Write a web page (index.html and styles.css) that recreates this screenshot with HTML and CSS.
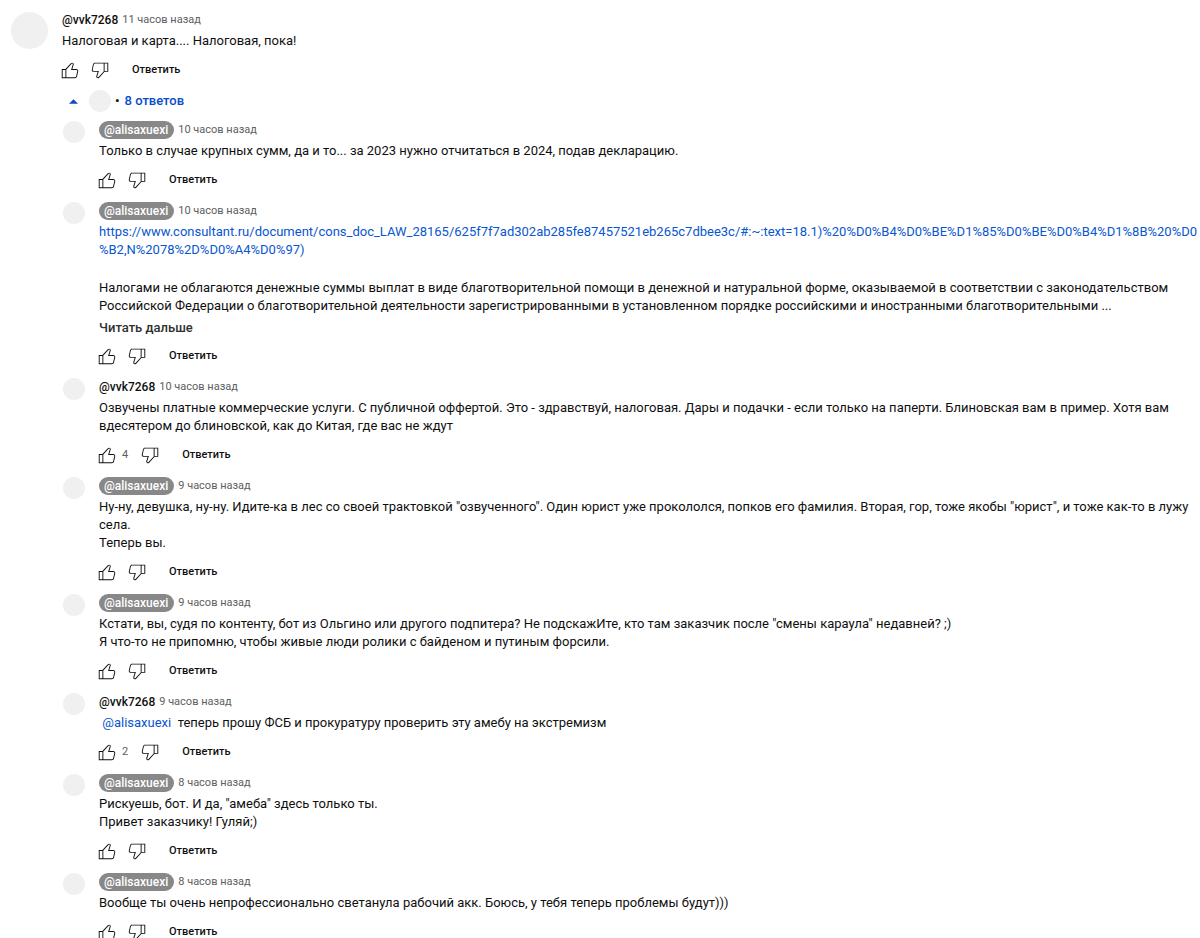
FILE: index.html
```html
<!DOCTYPE html>
<html lang="ru">
<head>
<meta charset="utf-8">
<title>Комментарии</title>
<link rel="stylesheet" href="styles.css">
</head>
<body>
<svg class="sprite" aria-hidden="true">
  <symbol id="like" viewBox="0 0 24 24"><path d="M18.77,11h-4.23l1.52-4.94C16.38,5.03,15.54,4,14.38,4c-0.58,0-1.14,0.24-1.52,0.65L7,11H3v10h4h1h9.43c1.06,0,1.98-0.67,2.19-1.61l1.34-6C21.23,12.15,20.18,11,18.77,11z M7,20H4v-8h3V20z M19.98,13.17l-1.34,6C18.54,19.65,18.03,20,17.43,20H8v-8.61l5.6-6.06C13.79,5.12,14.08,5,14.38,5c0.26,0,0.5,0.11,0.63,0.3c0.07,0.1,0.15,0.26,0.09,0.47l-1.52,4.94L13.18,12h1.35h4.23c0.41,0,0.8,0.17,1.03,0.46C19.92,12.61,20.05,12.86,19.98,13.17z"/></symbol>
  <symbol id="dislike" viewBox="0 0 24 24"><path d="M17,4h-1H6.57C5.5,4,4.59,4.67,4.38,5.61l-1.34,6C2.77,12.85,3.82,14,5.23,14h4.23l-1.52,4.94C7.62,19.97,8.46,21,9.62,21c0.58,0,1.14-0.24,1.52-0.65L17,14h4V4H17z M10.4,19.67C10.21,19.88,9.92,20,9.62,20c-0.26,0-0.5-0.11-0.63-0.3c-0.07-0.1-0.15-0.26-0.09-0.47l1.52-4.94l0.4-1.29H9.46H5.23c-0.41,0-0.8-0.17-1.03-0.46c-0.12-0.15-0.25-0.4-0.18-0.72l1.34-6C5.46,5.35,5.97,5,6.57,5H16v8.61L10.4,19.67z M20,13h-3V5h3V13z"/></symbol>
</svg>
<main class="thread">
  <article class="comment">
    <div class="avatar avatar-large"></div>
    <div class="content">
      <header class="meta"><a class="name" href="#">@vvk7268</a><a class="time" href="#">11 часов назад</a></header>
      <div class="text"><p>Налоговая и карта.... Налоговая, пока!</p></div>
      <div class="actions">
        <button class="icon-button" aria-label="Нравится"><svg class="icon"><use href="#like"/></svg></button>
        <button class="icon-button" aria-label="Не нравится"><svg class="icon"><use href="#dislike"/></svg></button>
        <button class="reply-button">Ответить</button>
      </div>
      <button class="toggle">
        <svg class="caret" viewBox="0 0 10 5" aria-hidden="true"><path d="M0 5L5 0L10 5Z"/></svg>
        <span class="avatar"></span>
        <span class="dot">•</span>
        <span>8 ответов</span>
      </button>
      <section class="replies">
        <article class="comment reply">
          <div class="avatar"></div>
          <div class="content">
            <header class="meta"><a class="name author" href="#">@alisaxuexi</a><a class="time" href="#">10 часов назад</a></header>
            <div class="text"><p>Только в случае крупных сумм, да и то... за 2023 нужно отчитаться в 2024, подав декларацию.</p></div>
            <div class="actions">
              <button class="icon-button" aria-label="Нравится"><svg class="icon"><use href="#like"/></svg></button>
              <button class="icon-button" aria-label="Не нравится"><svg class="icon"><use href="#dislike"/></svg></button>
              <button class="reply-button">Ответить</button>
            </div>
          </div>
        </article>
        <article class="comment reply">
          <div class="avatar"></div>
          <div class="content">
            <header class="meta"><a class="name author" href="#">@alisaxuexi</a><a class="time" href="#">10 часов назад</a></header>
            <div class="text">
              <p><a class="link long-link" href="#">https://www.consultant.ru/document/cons_doc_LAW_28165/625f7f7ad302ab285fe87457521eb265c7dbee3c/#:~:text=18.1)%20%D0%B4%D0%BE%D1%85%D0%BE%D0%B4%D1%8B%20%D0%B2,N%2078%2D%D0%A4%D0%97)</a></p>
              <p>Налогами не облагаются денежные суммы выплат в виде благотворительной помощи в денежной и натуральной форме, оказываемой в соответствии с законодательством Российской Федерации о благотворительной деятельности зарегистрированными в установленном порядке российскими и иностранными благотворительными ...</p>
            </div>
            <button class="more">Читать дальше</button>
            <div class="actions">
              <button class="icon-button" aria-label="Нравится"><svg class="icon"><use href="#like"/></svg></button>
              <button class="icon-button" aria-label="Не нравится"><svg class="icon"><use href="#dislike"/></svg></button>
              <button class="reply-button">Ответить</button>
            </div>
          </div>
        </article>
        <article class="comment reply">
          <div class="avatar"></div>
          <div class="content">
            <header class="meta"><a class="name" href="#">@vvk7268</a><a class="time" href="#">10 часов назад</a></header>
            <div class="text"><p>Озвучены платные коммерческие услуги. С публичной оффертой. Это - здравствуй, налоговая. Дары и подачки - если только на паперти. Блиновская вам в пример. Хотя вам вдесятером до блиновской, как до Китая, где вас не ждут</p></div>
            <div class="actions">
              <button class="icon-button" aria-label="Нравится"><svg class="icon"><use href="#like"/></svg></button>
              <span class="count">4</span>
              <button class="icon-button" aria-label="Не нравится"><svg class="icon"><use href="#dislike"/></svg></button>
              <button class="reply-button">Ответить</button>
            </div>
          </div>
        </article>
        <article class="comment reply">
          <div class="avatar"></div>
          <div class="content">
            <header class="meta"><a class="name author" href="#">@alisaxuexi</a><a class="time" href="#">9 часов назад</a></header>
            <div class="text"><p>Ну-ну, девушка, ну-ну. Идите-ка в лес со своей трактовкой "озвученного". Один юрист уже прокололся, попков его фамилия. Вторая, гор, тоже якобы "юрист", и тоже как-то в лужу села.<br>Теперь вы.</p></div>
            <div class="actions">
              <button class="icon-button" aria-label="Нравится"><svg class="icon"><use href="#like"/></svg></button>
              <button class="icon-button" aria-label="Не нравится"><svg class="icon"><use href="#dislike"/></svg></button>
              <button class="reply-button">Ответить</button>
            </div>
          </div>
        </article>
        <article class="comment reply">
          <div class="avatar"></div>
          <div class="content">
            <header class="meta"><a class="name author" href="#">@alisaxuexi</a><a class="time" href="#">9 часов назад</a></header>
            <div class="text"><p>Кстати, вы, судя по контенту, бот из Ольгино или другого подпитера? Не подскажИте, кто там заказчик после "смены караула" недавней? ;)<br>Я что-то не припомню, чтобы живые люди ролики с байденом и путиным форсили.</p></div>
            <div class="actions">
              <button class="icon-button" aria-label="Нравится"><svg class="icon"><use href="#like"/></svg></button>
              <button class="icon-button" aria-label="Не нравится"><svg class="icon"><use href="#dislike"/></svg></button>
              <button class="reply-button">Ответить</button>
            </div>
          </div>
        </article>
        <article class="comment reply">
          <div class="avatar"></div>
          <div class="content">
            <header class="meta"><a class="name" href="#">@vvk7268</a><a class="time" href="#">9 часов назад</a></header>
            <div class="text"><p>&nbsp;<a class="link" href="#">@alisaxuexi</a>&nbsp; теперь прошу ФСБ и прокуратуру проверить эту амебу на экстремизм</p></div>
            <div class="actions">
              <button class="icon-button" aria-label="Нравится"><svg class="icon"><use href="#like"/></svg></button>
              <span class="count">2</span>
              <button class="icon-button" aria-label="Не нравится"><svg class="icon"><use href="#dislike"/></svg></button>
              <button class="reply-button">Ответить</button>
            </div>
          </div>
        </article>
        <article class="comment reply">
          <div class="avatar"></div>
          <div class="content">
            <header class="meta"><a class="name author" href="#">@alisaxuexi</a><a class="time" href="#">8 часов назад</a></header>
            <div class="text"><p>Рискуешь, бот. И да, "амеба" здесь только ты.<br>Привет заказчику! Гуляй;)</p></div>
            <div class="actions">
              <button class="icon-button" aria-label="Нравится"><svg class="icon"><use href="#like"/></svg></button>
              <button class="icon-button" aria-label="Не нравится"><svg class="icon"><use href="#dislike"/></svg></button>
              <button class="reply-button">Ответить</button>
            </div>
          </div>
        </article>
        <article class="comment reply">
          <div class="avatar"></div>
          <div class="content">
            <header class="meta"><a class="name author" href="#">@alisaxuexi</a><a class="time" href="#">8 часов назад</a></header>
            <div class="text"><p>Вообще ты очень непрофессионально светанула рабочий акк. Боюсь, у тебя теперь проблемы будут)))</p></div>
            <div class="actions">
              <button class="icon-button" aria-label="Нравится"><svg class="icon"><use href="#like"/></svg></button>
              <button class="icon-button" aria-label="Не нравится"><svg class="icon"><use href="#dislike"/></svg></button>
              <button class="reply-button">Ответить</button>
            </div>
          </div>
        </article>
      </section>
    </div>
  </article>
</main>
</body>
</html>
```
FILE: styles.css
```css
* {
  box-sizing: border-box;
}

html {
  scrollbar-width: none;
}

body {
  margin: 0;
  background: #fff;
  color: #0f0f0f;
  font-family: Roboto, Arial, sans-serif;
  font-size: 13px;
  line-height: 18px;
}

a {
  color: inherit;
  text-decoration: none;
}

p {
  margin: 0;
}

button {
  margin: 0;
  padding: 0;
  border: 0;
  background: none;
  color: inherit;
  font: inherit;
  cursor: pointer;
}

.sprite {
  display: none;
}

.thread {
  padding: 11px 1px 0 11px;
}

.comment {
  display: flex;
  align-items: flex-start;
  gap: 14px;
}

.reply {
  padding-bottom: 7px;
}

.avatar {
  flex: none;
  width: 22px;
  height: 22px;
  border-radius: 50%;
  background: #f0f0f0;
}

.avatar-large {
  width: 37px;
  height: 37px;
  margin-top: 1px;
}

.content {
  flex: 1;
  min-width: 0;
}

.meta {
  display: flex;
  align-items: center;
  gap: 4px;
  margin-bottom: 3px;
  font-size: 12px;
}

.name {
  font-weight: 500;
}

.author {
  padding: 0 6px 0 5px;
  border-radius: 9px;
  background: #888;
  color: #fff;
}

.time {
  color: #606060;
  font-size: 11px;
}

.text p + p {
  margin-top: 20px;
}

.link {
  color: #0856d0;
}

.long-link {
  line-break: anywhere;
}

.more {
  display: block;
  margin-top: 4px;
  color: #303030;
  font-weight: 500;
}

.actions {
  display: flex;
  align-items: center;
  margin: 5px 0 0 -7px;
  font-size: 11px;
}

.more + .actions {
  margin-top: 4px;
}

.icon-button {
  display: grid;
  place-items: center;
  width: 30px;
  height: 30px;
}

.icon {
  width: 22px;
  height: 22px;
  fill: #0f0f0f;
}

.count {
  padding-right: 7px;
  color: #606060;
}

.reply-button {
  height: 30px;
  margin-left: 2px;
  padding: 0 15px;
  font-weight: 500;
}

.toggle {
  display: flex;
  align-items: center;
  height: 32px;
  margin-bottom: 4px;
  padding-left: 7px;
  color: #084bcb;
  font-weight: 500;
}

.caret {
  width: 9px;
  height: 5px;
  margin-right: 11px;
  fill: #084bcb;
}

.dot {
  margin: 0 5px 0 4px;
  color: #0f0f0f;
}

.replies {
  padding-left: 1px;
}
```
